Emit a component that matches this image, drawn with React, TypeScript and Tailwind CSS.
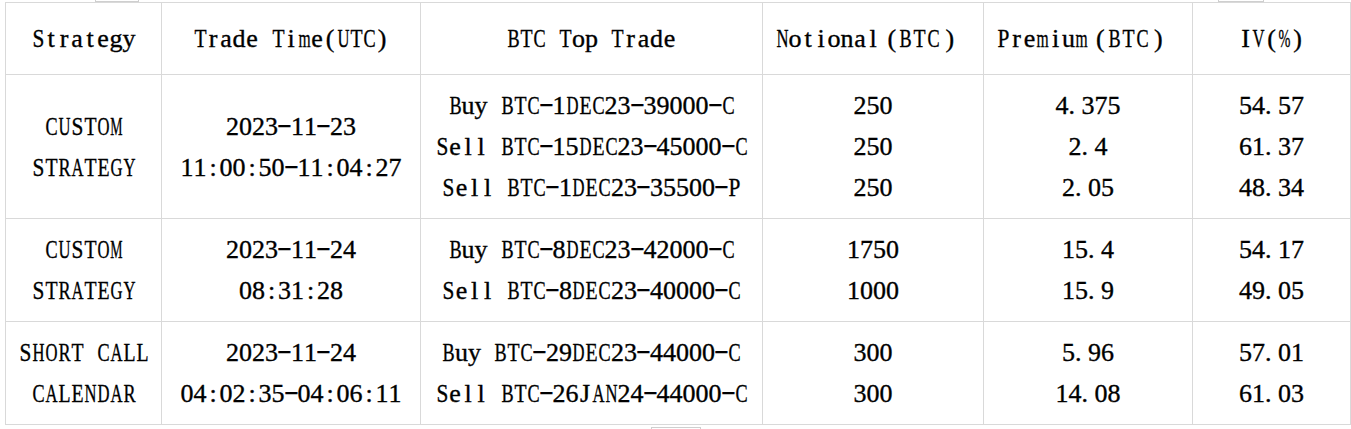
import React from "react";

function charClass(c: string): string {
  if ("ADGHKNOQUVXY".includes(c)) return "inline-flex justify-center w-[13px] scale-x-[0.64]";
  if ("BCR".includes(c)) return "inline-flex justify-center w-[13px] scale-x-[0.7]";
  if ("ELTZ".includes(c)) return "inline-flex justify-center w-[13px] scale-x-[0.76]";
  if ("FPS".includes(c)) return "inline-flex justify-center w-[13px] scale-x-[0.82]";
  if (c === "M") return "inline-flex justify-center w-[13px] scale-x-[0.53]";
  if (c === "W") return "inline-flex justify-center w-[13px] scale-x-[0.5]";
  if (c === "m") return "inline-flex justify-center w-[13px] scale-x-[0.6]";
  if (c === "w") return "inline-flex justify-center w-[13px] scale-x-[0.65]";
  if (c === "%") return "inline-flex justify-center w-[13px] scale-x-[0.55]";
  if (c === "-") return "inline-flex justify-center w-[13px] scale-x-[1.7] -translate-y-[3px]";
  if (c === ".") return "inline-flex justify-start w-[13px]";
  return "inline-flex justify-center w-[13px]";
}

function Line({ s }: { s: string }) {
  let inFull = false;
  return (
    <div className="whitespace-nowrap">
      {[...s].map((c, i) => {
        if (c === "（") {
          inFull = true;
          return (
            <span key={i} className="inline-flex justify-start w-[19px] pl-[8px]">
              (
            </span>
          );
        }
        if (c === "）") {
          inFull = false;
          return (
            <span key={i} className="inline-flex justify-start w-[30px] pl-[5px]">
              )
            </span>
          );
        }
        const inner = <span className={charClass(c)}>{c}</span>;
        if (inFull)
          return (
            <span key={i} className="inline-flex justify-center w-[14px]">
              {inner}
            </span>
          );
        return <React.Fragment key={i}>{inner}</React.Fragment>;
      })}
    </div>
  );
}

function Cell({ lines }: { lines: string[] }) {
  return (
    <td className="border border-[#d9d9d9] p-0 text-center align-middle">
      {lines.map((l, i) => (
        <Line key={i} s={l} />
      ))}
    </td>
  );
}

const headers = [
  "Strategy",
  "Trade Time(UTC)",
  "BTC Top Trade",
  "Notional（BTC）",
  "Premium（BTC）",
  "IV(%)",
];

const rows: { h: string; cells: string[][] }[] = [
  {
    h: "h-[144px]",
    cells: [
      ["CUSTOM", "STRATEGY"],
      ["2023-11-23", "11:00:50-11:04:27"],
      ["Buy BTC-1DEC23-39000-C", "Sell BTC-15DEC23-45000-C", "Sell BTC-1DEC23-35500-P"],
      ["250", "250", "250"],
      ["4.375", "2.4", "2.05"],
      ["54.57", "61.37", "48.34"],
    ],
  },
  {
    h: "h-[103px]",
    cells: [
      ["CUSTOM", "STRATEGY"],
      ["2023-11-24", "08:31:28"],
      ["Buy BTC-8DEC23-42000-C", "Sell BTC-8DEC23-40000-C"],
      ["1750", "1000"],
      ["15.4", "15.9"],
      ["54.17", "49.05"],
    ],
  },
  {
    h: "h-[103px]",
    cells: [
      ["SHORT CALL", "CALENDAR"],
      ["2023-11-24", "04:02:35-04:06:11"],
      ["Buy BTC-29DEC23-44000-C", "Sell BTC-26JAN24-44000-C"],
      ["300", "300"],
      ["5.96", "14.08"],
      ["57.01", "61.03"],
    ],
  },
];

export default function App() {
  return (
    <div
      className="relative w-[1351px] h-[429px] overflow-hidden bg-white pl-[5px] pt-[2px] text-[26px] leading-[41px] text-black [-webkit-text-stroke:0.35px_#000]"
      style={{ fontFamily: '"Liberation Serif", "Times New Roman", serif' }}
    >
      <div className="absolute left-[95px] top-[-2px] h-[4px] w-[44px] border border-[#cfcfcf]" />
      <div className="absolute left-[1218px] top-[-2px] h-[4px] w-[46px] border border-[#cfcfcf]" />
      <div className="absolute left-[651px] top-[427px] h-[6px] w-[50px] border border-[#cfcfcf]" />
      <table className="table-fixed border-collapse w-[1345px]">
        <colgroup>
          <col className="w-[156px]" />
          <col className="w-[259px]" />
          <col className="w-[342px]" />
          <col className="w-[221px]" />
          <col className="w-[209px]" />
          <col className="w-[158px]" />
        </colgroup>
        <tbody>
          <tr className="h-[72px]">
            {headers.map((h, i) => (
              <Cell key={i} lines={[h]} />
            ))}
          </tr>
          {rows.map((r, ri) => (
            <tr key={ri} className={r.h}>
              {r.cells.map((c, ci) => (
                <Cell key={ci} lines={c} />
              ))}
            </tr>
          ))}
        </tbody>
      </table>
    </div>
  );
}
